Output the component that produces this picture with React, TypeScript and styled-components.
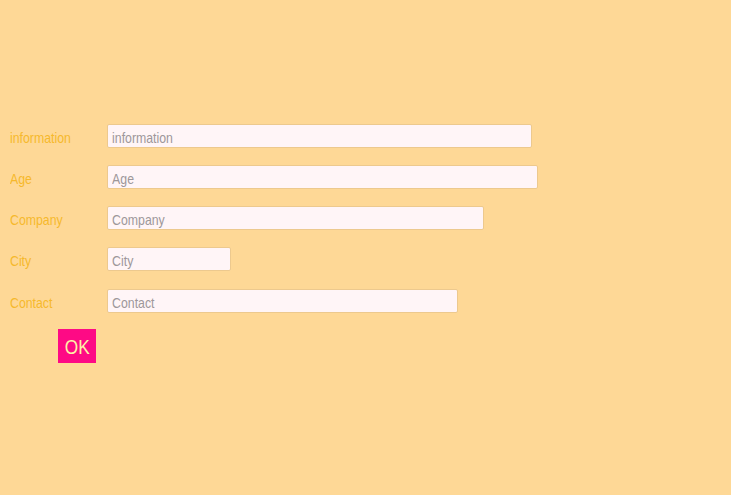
import React from "react";
import styled, { createGlobalStyle } from "styled-components";

const NARROW = 0.82;

const Global = createGlobalStyle`
  html, body { margin: 0; padding: 0; background: #fed896; }
  body { font-family: "Liberation Sans", Arial, sans-serif; }
`;

const Page = styled.div`
  width: 731px;
  height: 495px;
  background: #fed896;
  padding: 124px 0 0 10px;
  box-sizing: border-box;
`;

const Form = styled.form`
  display: flex;
  flex-direction: column;
  gap: 17px;
`;

const Row = styled.div<{ $shift?: number }>`
  display: flex;
  align-items: baseline;
  margin-top: ${(p) => p.$shift ?? 0}px;
`;

const Label = styled.label`
  width: 97px;
  flex: none;
  font-size: 15px;
  color: #f6b82c;
  white-space: nowrap;
`;

const Narrow = styled.span`
  display: inline-block;
  transform: scaleX(${NARROW});
  transform-origin: left center;
`;

const Field = styled.div<{ $w: number }>`
  width: ${(p) => p.$w}px;
  height: 24px;
  box-sizing: border-box;
  border: 1px solid #edc98e;
  border-radius: 2px;
  background: #fff5f7;
  overflow: hidden;
  display: flex;
`;

const Input = styled.input<{ $w: number }>`
  width: ${(p) => (p.$w - 2) / NARROW}px;
  height: 22px;
  box-sizing: border-box;
  flex: none;
  border: none;
  background: transparent;
  padding: 2px 5px 0;
  margin: 0;
  font-family: inherit;
  font-size: 15px;
  color: #555;
  outline: none;
  transform: scaleX(${NARROW});
  transform-origin: left center;
  &::placeholder { color: #9d979a; opacity: 1; }
`;

const Button = styled.button`
  margin: 0 0 0 48px;
  width: 38px;
  height: 34px;
  border: none;
  background: #fe0a85;
  color: #fff1a6;
  font-family: inherit;
  font-size: 21px;
  padding: 1px 0 0;
  cursor: pointer;
`;

const fields: { name: string; w: number; shift?: number }[] = [
  { name: "information", w: 425 },
  { name: "Age", w: 431 },
  { name: "Company", w: 377 },
  { name: "City", w: 124 },
  { name: "Contact", w: 351, shift: 1 },
];

export default function App() {
  return (
    <Page>
      <Global />
      <Form onSubmit={(e) => e.preventDefault()}>
        {fields.map((f) => (
          <Row key={f.name} $shift={f.shift}>
            <Label>
              <Narrow>{f.name}</Narrow>
            </Label>
            <Field $w={f.w}>
              <Input $w={f.w} placeholder={f.name} />
            </Field>
          </Row>
        ))}
        <Row $shift={-1}>
          <Button type="submit">
            <Narrow style={{ transformOrigin: "center" }}>OK</Narrow>
          </Button>
        </Row>
      </Form>
    </Page>
  );
}
